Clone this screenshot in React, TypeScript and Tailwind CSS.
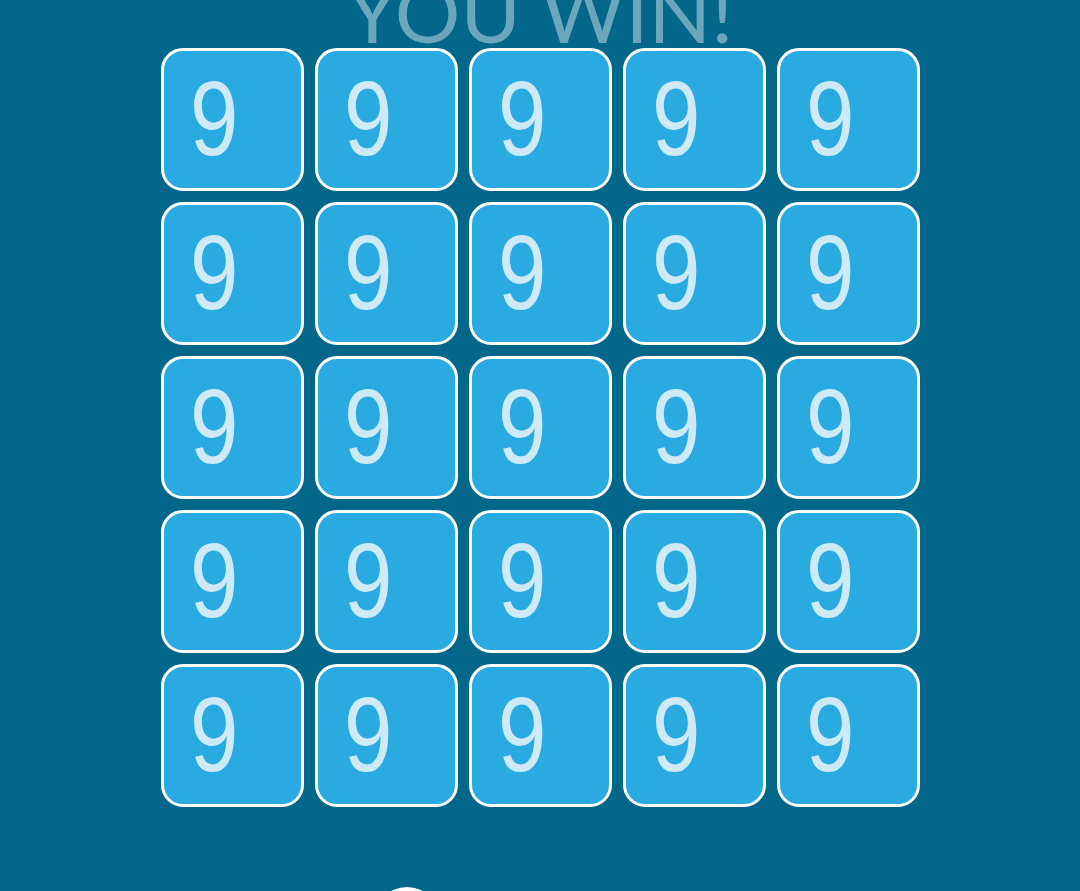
import React from 'react'

const TILES = Array.from({ length: 25 }, (_, i) => ({ id: i, value: 9 }))

// ── Single tile ───────────────────────────────────────────────────────────────
function Tile({ value }: { value: number }) {
  return (
    <div className="w-[143px] h-[143px] rounded-[22px] border-[3px] border-white bg-[#29abe2] pl-[26px] pt-[14px]">
      <span
        className="block origin-left scale-x-[0.82] text-[106px] leading-none font-normal text-[#cdeaf6]"
        style={{ fontFamily: '"Liberation Sans", Arial, sans-serif' }}
      >
        {value}
      </span>
    </div>
  )
}

// ── Main ──────────────────────────────────────────────────────────────────────
export default function App() {
  return (
    <div className="h-[891px] w-full overflow-hidden bg-[#03678a] flex flex-col items-center">
      {/* Title (scrolled partly out of view) */}
      <h1
        className="mt-[-30px] h-[78px] text-[82px] leading-none font-normal text-[#6ba6bd] select-none whitespace-nowrap"
        style={{ fontFamily: 'Lato, "Open Sans", sans-serif' }}
      >
        YOU WIN!
      </h1>

      {/* Board */}
      <div className="grid grid-cols-5 gap-[11px]">
        {TILES.map(t => (
          <Tile key={t.id} value={t.value} />
        ))}
      </div>

      {/* Buttons row */}
      <div className="w-[759px] mt-[80px] flex">
        <div className="ml-[213px] w-[66px] h-[66px] rounded-full bg-white" />
      </div>
    </div>
  )
}
